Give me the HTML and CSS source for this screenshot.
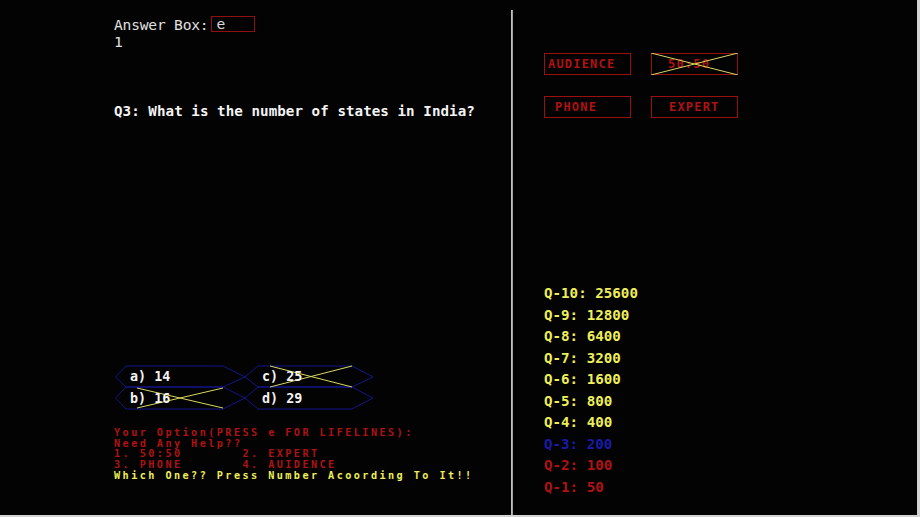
FILE: index.html
```html
<!DOCTYPE html>
<html>
<head>
<meta charset="utf-8">
<link rel="stylesheet" href="styles.css">
</head>
<body>
<div class="screen">
  <div class="left">
    <div class="answer-row">
      <span class="answer-label">Answer Box:</span>
      <span class="answer-box">e</span>
    </div>
    <div class="answer-num">1</div>
    <div class="question">Q3: What is the number of states in India?</div>
    <div class="options">
      <svg class="hexes" width="262" height="46" viewBox="0 0 262 46">
        <g fill="none" stroke="#14148a" stroke-width="1">
          <polygon points="0.5,12 11,1 108,1 130,12 108,22 11,22"/>
          <polygon points="0.5,33 11,22 108,22 130,33 108,44 11,44"/>
          <polygon points="130,12 143,1 237,1 258,12 237,22 143,22"/>
          <polygon points="130,33 143,22 237,22 258,33 237,44 143,44"/>
        </g>
        <g stroke="#d8d860" stroke-width="1">
          <line x1="155" y1="1" x2="237" y2="22"/>
          <line x1="155" y1="22" x2="237" y2="1"/>
          <line x1="22" y1="23" x2="108" y2="43"/>
          <line x1="22" y1="43" x2="108" y2="23"/>
        </g>
      </svg>
      <span class="opt">a) 14</span>
      <span class="opt">c) 25</span>
      <span class="opt">b) 16</span>
      <span class="opt">d) 29</span>
    </div>
    <div class="prompt">
      <div class="red">Your Option(PRESS e FOR LIFELINES):</div>
      <div class="red">Need Any Help??</div>
      <div class="red pre">1. 50:50       2. EXPERT</div>
      <div class="red pre">3. PHONE       4. AUIDENCE</div>
      <div class="yellow">Which One?? Press Number Acoording To It!!</div>
    </div>
  </div>
  <div class="divider"></div>
  <div class="right">
    <div class="lifelines">
      <div class="btn pad-aud">AUDIENCE</div>
      <div class="btn pad-ff used">50:50
        <svg class="cross" width="87" height="22" viewBox="0 0 87 22" preserveAspectRatio="none">
          <line x1="0" y1="0" x2="87" y2="22" stroke="#d8d860" stroke-width="1"/>
          <line x1="0" y1="22" x2="87" y2="0" stroke="#d8d860" stroke-width="1"/>
        </svg>
      </div>
      <div class="btn pad-ph">PHONE</div>
      <div class="btn pad-ex">EXPERT</div>
    </div>
    <div class="ladder">
      <div class="yellow">Q-10: 25600</div>
      <div class="yellow">Q-9: 12800</div>
      <div class="yellow">Q-8: 6400</div>
      <div class="yellow">Q-7: 3200</div>
      <div class="yellow">Q-6: 1600</div>
      <div class="yellow">Q-5: 800</div>
      <div class="yellow">Q-4: 400</div>
      <div class="blue">Q-3: 200</div>
      <div class="red">Q-2: 100</div>
      <div class="red">Q-1: 50</div>
    </div>
  </div>
</div>
</body>
</html>
```

FILE: styles.css
```css
html, body {
  margin: 0;
  padding: 0;
  background: #d4d4d4;
}
.screen {
  width: 917px;
  height: 515px;
  background: #030303;
  display: flex;
  font-family: "DejaVu Sans Mono", "Liberation Mono", monospace;
  font-size: 14.2px;
  font-weight: bold;
  color: #f4f4f4;
}
.left {
  width: 511px;
  box-sizing: border-box;
  padding-left: 114px;
  display: flex;
  flex-direction: column;
}
.answer-row {
  margin-top: 16px;
  height: 16px;
  display: flex;
  align-items: center;
}
.answer-label {
  font-weight: normal;
  font-size: 14.6px;
  color: #e0e0e0;
  letter-spacing: -0.2px;
}
.answer-box {
  margin-left: 3px;
  width: 44px;
  height: 16px;
  box-sizing: border-box;
  border: 1px solid #8e1010;
  padding-left: 4px;
  font-weight: normal;
  font-size: 14.6px;
  line-height: 13px;
  color: #d8d8d8;
}
.answer-num {
  height: 20px;
  line-height: 20px;
  font-weight: normal;
  font-size: 14.6px;
  color: #e0e0e0;
}
.question {
  margin-top: 51px;
  height: 16px;
  line-height: 16px;
  letter-spacing: 0.05px;
}
.options {
  margin-top: 246px;
  margin-left: 1px;
  position: relative;
  width: 262px;
  height: 44px;
  display: grid;
  grid-template-columns: 132px 130px;
  grid-template-rows: 22px 22px;
}
.hexes {
  position: absolute;
  left: 0;
  top: 0;
}
.opt {
  position: relative;
  padding-left: 15px;
  line-height: 24px;
  font-size: 13.4px;
}
.prompt {
  margin-top: 19px;
  font-size: 10.2px;
  letter-spacing: 2.43px;
  line-height: 10.7px;
}
.pre {
  white-space: pre;
}
.red {
  color: #b01212;
}
.yellow {
  color: #eeee58;
}
.blue {
  color: #1a1aa8;
}
.divider {
  margin-top: 10px;
  width: 2px;
  height: 505px;
  background: linear-gradient(to right, #d0d0d0, #909090);
}
.right {
  flex: 1;
  padding-left: 31px;
  display: flex;
  flex-direction: column;
}
.lifelines {
  margin-top: 53px;
  display: grid;
  grid-template-columns: 87px 87px;
  grid-template-rows: 22px 22px;
  column-gap: 20px;
  row-gap: 21px;
}
.btn {
  position: relative;
  box-sizing: border-box;
  border: 1px solid #9a1010;
  color: #b01212;
  font-weight: bold;
  font-size: 12px;
  letter-spacing: 1.2px;
  line-height: 20px;
  white-space: nowrap;
}
.pad-aud { padding-left: 3px; }
.pad-ff { padding-left: 16px; }
.pad-ph { padding-left: 10px; }
.pad-ex { padding-left: 17px; }
.cross {
  position: absolute;
  left: -1px;
  top: -1px;
}
.ladder {
  margin-top: 165px;
  line-height: 21.5px;
}
```
